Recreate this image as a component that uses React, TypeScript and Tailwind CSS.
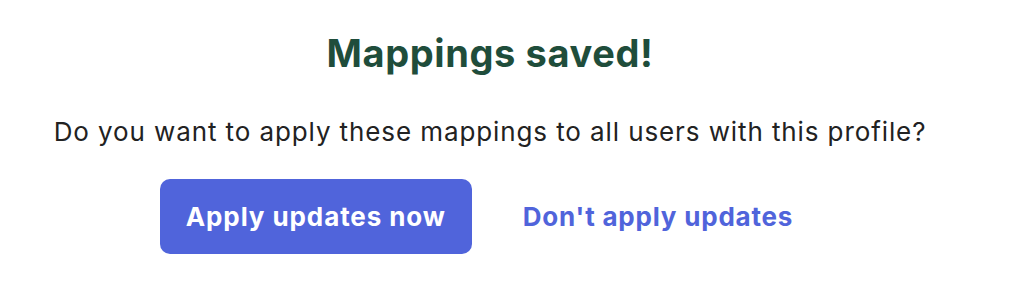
export default function App() {
  return (
    <div className="w-[1014px] h-[298px] bg-white" style={{ fontFamily: 'Inter, "Noto Sans", sans-serif' }}>
      <div className="w-[980px] flex flex-col items-center pt-[30px]">
        <h1 className="text-[38px] leading-[46px] font-bold tracking-[0.6px] text-[#1f4d3b]">Mappings saved!</h1>
        <p className="mt-[40px] text-[26px] leading-[32px] tracking-[0.9px] text-[#222]">
          Do you want to apply these mappings to all users with this profile?
        </p>
        <div className="mt-[31px] flex items-center gap-[24px]">
          <button
            type="button"
            className="h-[75px] w-[312px] rounded-[10px] bg-[#5064db] text-[26px] font-bold tracking-[0.9px] text-white"
          >
            Apply updates now
          </button>
          <button type="button" className="h-[75px] px-[27px] text-[26px] font-bold tracking-[0.8px] text-[#5064db]">
            Don't apply updates
          </button>
        </div>
      </div>
    </div>
  );
}
